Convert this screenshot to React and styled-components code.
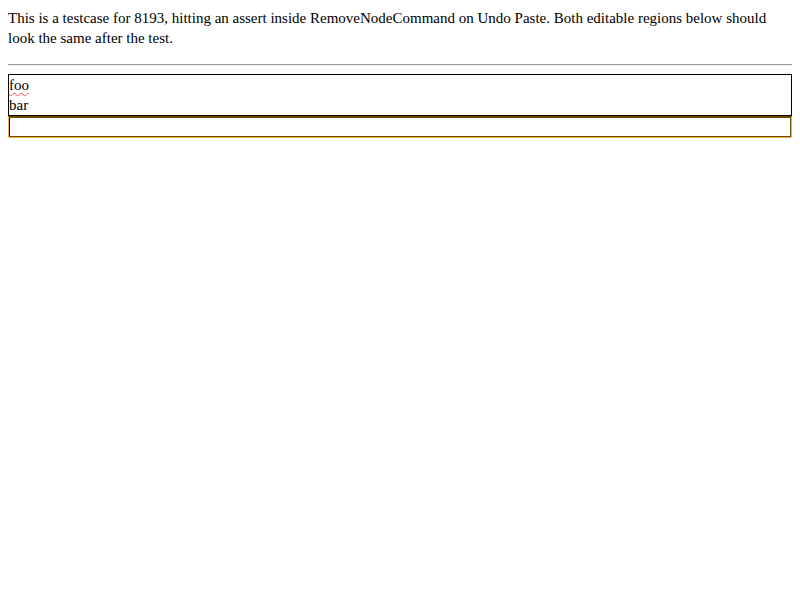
import React from "react";
import styled, { createGlobalStyle } from "styled-components";

const Global = createGlobalStyle`
  body {
    margin: 8px;
    background: #fff;
    color: #000;
    font-family: "Liberation Serif", "Times New Roman", serif;
    font-size: 15px;
    line-height: 20px;
  }
`

const Intro = styled.div`
  margin: 0;
`

const Rule = styled.hr`
  margin: 16px 0 8px;
  height: 0;
  border: 0;
  border-top: 1px solid #9a9a9a;
  border-bottom: 1px solid #eeeeee;
`

const Editable = styled.div`
  border: 1px solid #000;
  min-height: 20px;
  ${(p) =>
    p.focused &&
    `
    border-color: #f2b445;
    border-top-color: #6e4a00;
    box-shadow: inset 0 0 0 1px #6e4a00;
  `}
`

const Line = styled.div`
  height: 20px;
`

const Misspelled = styled.span`
  text-decoration: underline wavy #ff5050;
  text-decoration-thickness: 1px;
  text-underline-offset: 2px;
`

const Caret = styled.span`
  display: block;
  width: 0;
  height: 18px;
  margin: 1px 0 0 0;
  border-left: 1px solid #000;
`

export default function App() {
  return (
    <>
      <Global />
      <Intro>
        This is a testcase for 8193, hitting an assert inside RemoveNodeCommand on Undo Paste. Both editable regions below should look the same after the test.
      </Intro>
      <Rule />
      <Editable>
        <Line><Misspelled>foo</Misspelled></Line>
        <Line>bar</Line>
      </Editable>
      <Editable focused>
        <Caret />
      </Editable>
    </>
  );
}
